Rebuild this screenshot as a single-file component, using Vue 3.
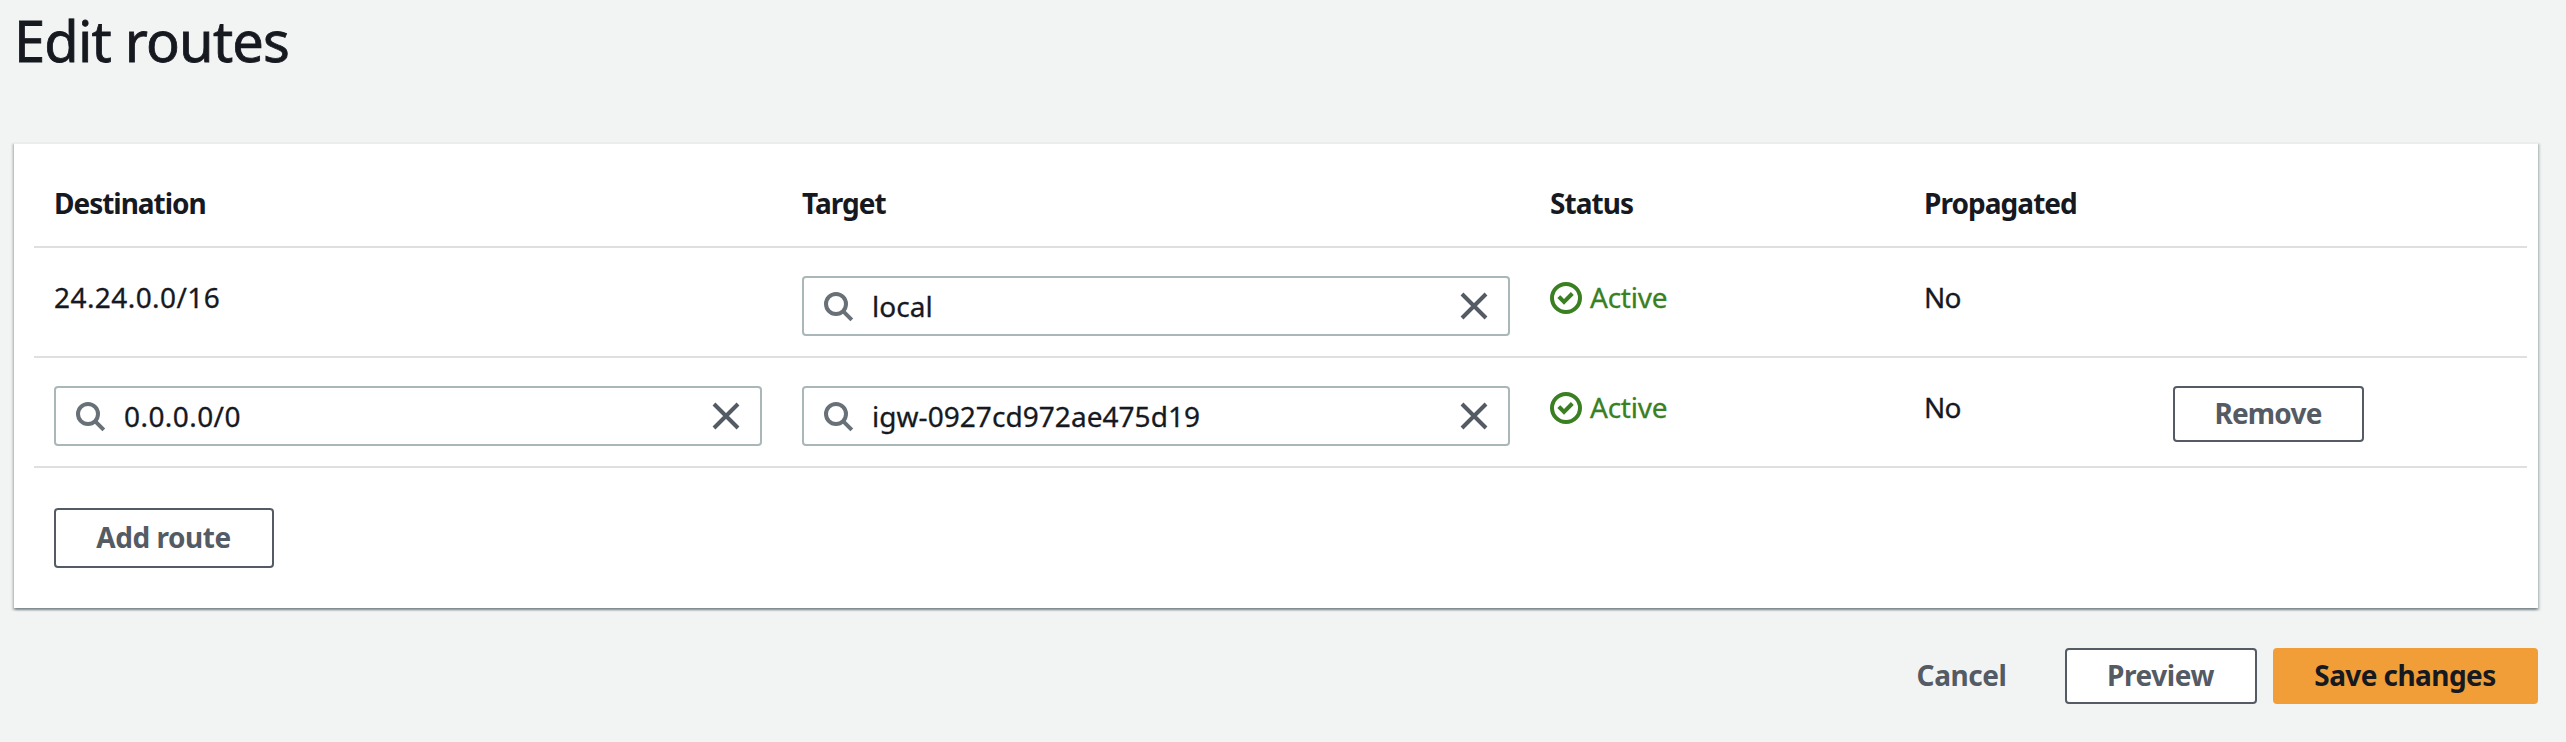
<script setup>
import { reactive } from 'vue'

const routes = reactive([
  { destination: '24.24.0.0/16', editable: false, target: 'local', status: 'Active', propagated: 'No' },
  { destination: '0.0.0.0/0', editable: true, target: 'igw-0927cd972ae475d19', status: 'Active', propagated: 'No' },
])
</script>

<template>
  <main class="page">
    <h1 class="title">Edit routes</h1>

    <section class="panel">
      <div class="table">
        <div class="row head">
          <div class="cell destination">Destination</div>
          <div class="cell">Target</div>
          <div class="cell">Status</div>
          <div class="cell">Propagated</div>
          <div class="cell"></div>
        </div>

        <div v-for="(route, i) in routes" :key="i" class="row">
          <div class="cell" :class="route.editable ? 'control' : 'plain numeric'">
            <div v-if="route.editable" class="field">
              <svg class="icon search" viewBox="0 0 16 16"><circle cx="7" cy="7" r="5" /><path d="M14.9 14.9l-4.5-4.5" /></svg>
              <input v-model="route.destination" class="numeric" type="text" />
              <svg class="icon clear" viewBox="0 0 16 16"><path d="M2 2l12 12M14 2L2 14" /></svg>
            </div>
            <template v-else>{{ route.destination }}</template>
          </div>
          <div class="cell control">
            <div class="field">
              <svg class="icon search" viewBox="0 0 16 16"><circle cx="7" cy="7" r="5" /><path d="M14.9 14.9l-4.5-4.5" /></svg>
              <input v-model="route.target" type="text" />
              <svg class="icon clear" viewBox="0 0 16 16"><path d="M2 2l12 12M14 2L2 14" /></svg>
            </div>
          </div>
          <div class="cell plain status">
            <svg class="icon check" viewBox="0 0 16 16"><circle cx="8" cy="8" r="7" /><path class="tick" d="M5.1 8l1.9 1.9 3.45-3.45" /></svg>
            <span>{{ route.status }}</span>
          </div>
          <div class="cell plain propagated">{{ route.propagated }}</div>
          <div class="cell control">
            <button v-if="route.editable" class="btn remove">Remove</button>
          </div>
        </div>
      </div>

      <button class="btn add">Add route</button>
    </section>

    <footer class="actions">
      <button class="btn link">Cancel</button>
      <button class="btn preview">Preview</button>
      <button class="btn primary">Save changes</button>
    </footer>
  </main>
</template>

<style>
body {
  background: #f2f4f3;
}
</style>

<style scoped>
.page {
  box-sizing: border-box;
  height: 742px;
  padding: 0 28px 0 14px;
  overflow: hidden;
  background: #f2f4f3;
  color: #16191f;
  font-family: "Noto Sans", "Open Sans", sans-serif;
  font-size: 28px;
  line-height: 42px;
  -webkit-text-stroke-width: 0.3px;
}

.title {
  margin: 0;
  height: 142px;
  font-size: 56px;
  font-weight: 400;
  line-height: 81px;
  letter-spacing: -0.8px;
  -webkit-text-stroke-width: 0.8px;
}

.panel {
  box-sizing: border-box;
  height: 466px;
  border-top: 2px solid #eaeded;
  background: #fff;
  box-shadow:
    0 2px 2px 0 rgba(0, 28, 36, 0.3),
    2px 2px 2px 0 rgba(0, 28, 36, 0.15),
    -2px 2px 2px 0 rgba(0, 28, 36, 0.15);
}

.table {
  margin: 0 11px 0 20px;
}

.row {
  box-sizing: border-box;
  display: grid;
  grid-template-columns: 748px 748px 374px 249px 1fr;
  height: 110px;
  border-bottom: 2px solid #dedfdf;
}

.head {
  height: 104px;
  padding-top: 38px;
  font-weight: 700;
  letter-spacing: -0.95px;
  -webkit-text-stroke-width: 0;
}

.destination {
  letter-spacing: -1.02px;
}

.cell {
  padding: 0 20px;
}

.plain {
  padding-top: 28px;
}

.control {
  padding-top: 28px;
}

.numeric {
  letter-spacing: 0.43px;
}

.propagated {
  letter-spacing: -0.9px;
}

.field {
  box-sizing: border-box;
  display: flex;
  align-items: center;
  height: 60px;
  padding: 0 18px;
  border: 2px solid #aab7b8;
  border-radius: 4px;
  background: #fff;
}

.field input {
  flex: 1;
  min-width: 0;
  height: 42px;
  margin: 0 16px 0 18px;
  padding: 0;
  border: 0;
  outline: 0;
  background: transparent;
  color: inherit;
  font: inherit;
  -webkit-text-stroke-width: 0.3px;
}

.field input:not(.numeric) {
  letter-spacing: 0.05px;
}

.icon {
  flex: none;
  width: 32px;
  height: 32px;
  fill: none;
  stroke-width: 2;
}

.search {
  stroke: #687078;
}

.clear {
  stroke: #545b64;
}

.status {
  display: flex;
  align-items: flex-start;
  gap: 8px;
  color: #3a7f21;
  letter-spacing: -0.25px;
}

.check {
  margin-top: 6px;
  stroke: #3a7f21;
}

.tick {
  stroke-linecap: square;
}

.btn {
  box-sizing: border-box;
  display: block;
  height: 56px;
  margin: 0;
  padding: 0 1px 2px 0;
  border: 2px solid #545b64;
  border-radius: 4px;
  background: #fff;
  color: #545b64;
  font: inherit;
  font-weight: 700;
  letter-spacing: -0.45px;
  text-align: center;
  -webkit-text-stroke-width: 0;
}

.remove {
  width: 191px;
  letter-spacing: -0.8px;
}

.add {
  width: 220px;
  height: 60px;
  margin: 40px 0 0 40px;
}

.actions {
  display: flex;
  justify-content: flex-end;
  padding-top: 40px;
}

.link {
  width: 132px;
  margin-right: 37px;
  border-color: transparent;
  background: transparent;
}

.preview {
  width: 192px;
  margin-right: 16px;
}

.primary {
  width: 265px;
  border-color: #f19e38;
  background: #f19e38;
  color: #16191f;
  letter-spacing: -0.57px;
}
</style>
